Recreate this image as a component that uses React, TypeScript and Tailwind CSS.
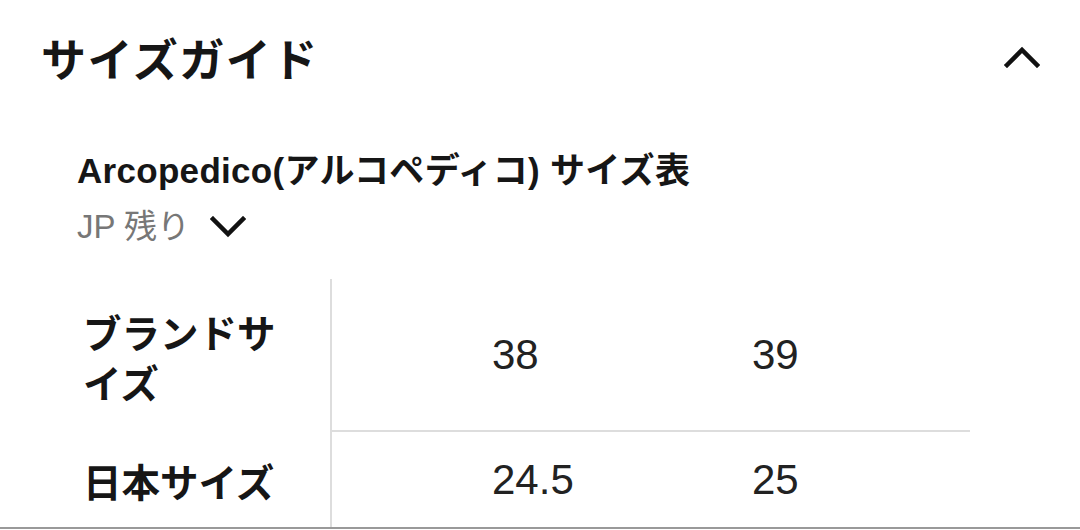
const font = { fontFamily: '"Liberation Sans", "Noto Sans CJK JP", sans-serif' };

type Row = { label: string; values: string[]; tall?: boolean };

const rows: Row[] = [
  { label: "ブランドサイズ", values: ["38", "39"], tall: true },
  { label: "日本サイズ", values: ["24.5", "25"] },
];

function Chevron({ up }: { up?: boolean }) {
  return (
    <svg width="36" height="22" viewBox="0 0 36 22" fill="none">
      <path
        d={up ? "M3 19 L18 4 L33 19" : "M3 3 L18 18 L33 3"}
        stroke="#111"
        strokeWidth="4.5"
        strokeLinecap="square"
        strokeLinejoin="miter"
      />
    </svg>
  );
}

export default function App() {
  return (
    <div className="h-[530px] w-[1080px] overflow-hidden bg-white text-[#161616]" style={font}>
      <div className="flex h-[114px] items-center justify-between pl-[41px] pr-[40px]">
        <h2 className="text-[45px] font-bold leading-none tracking-[1.5px]" style={{ fontFamily: '"Noto Sans CJK JP", sans-serif' }}>
          サイズガイド
        </h2>
        <Chevron up />
      </div>

      <div className="pl-[77px] pt-[37px]">
        <p className="text-[35px] font-semibold leading-[40px] tracking-[0.3px]">Arcopedico(アルコペディコ) サイズ表</p>
        <div className="mt-[16px] flex items-center gap-[20px] text-[33px] leading-[40px] text-[#777]">
          <span>JP 残り</span>
          <Chevron />
        </div>
      </div>

      <div className="mt-[32px] border-b-2 border-[#999]">
        <div className="ml-[77px] w-[893px]">
          {rows.map((row, i) => (
            <div key={row.label} className={`flex ${row.tall ? "h-[153px]" : "h-[95px]"}`}>
              <div className="flex w-[253px] shrink-0 items-center pl-[6px]">
                <span
                  className="w-[205px] text-[38.5px] font-bold leading-[50px]"
                  style={{ fontFamily: '"Noto Sans CJK JP", sans-serif' }}
                >
                  {row.label}
                </span>
              </div>
              <div
                className={`flex flex-1 items-center border-l-2 border-[#ddd] ${i === 0 ? "border-b-2" : ""}`}
              >
                {row.values.map((v) => (
                  <div key={v} className="w-[260px] pl-[160px] text-[42px] leading-none text-[#222]">
                    {v}
                  </div>
                ))}
              </div>
            </div>
          ))}
        </div>
      </div>
    </div>
  );
}
